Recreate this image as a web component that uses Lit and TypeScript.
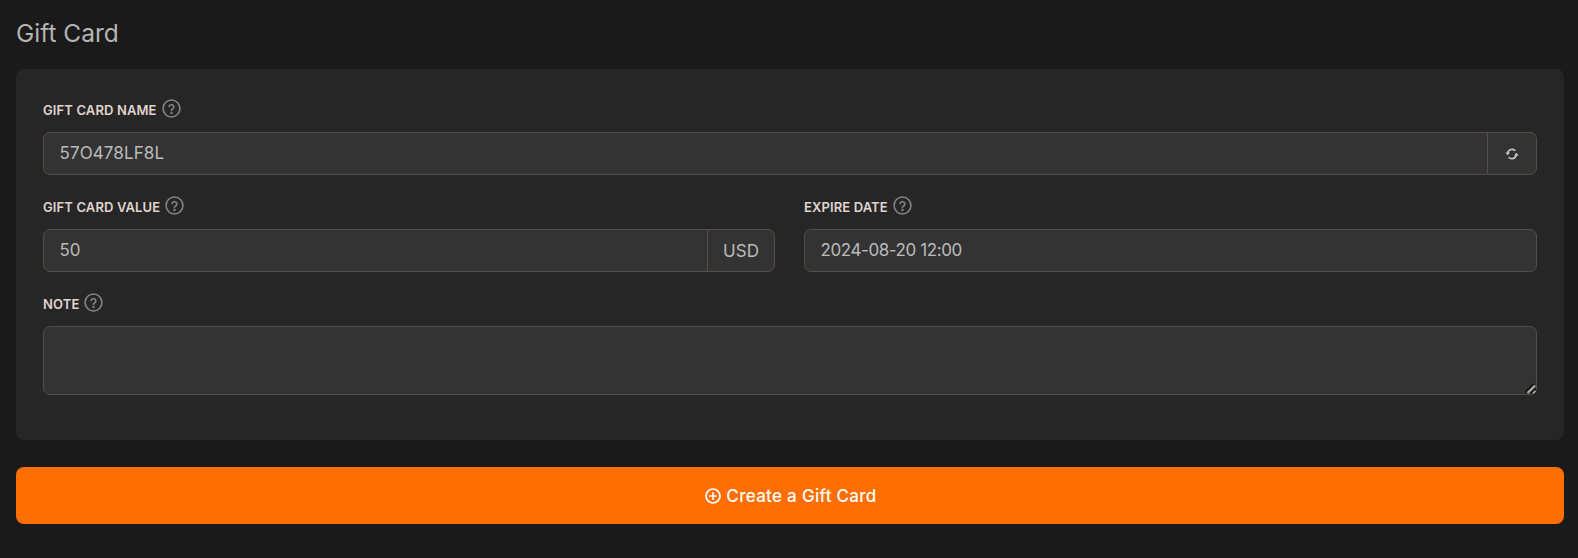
import { LitElement, html, css, svg } from "lit";
import { customElement } from "lit/decorators.js";

const help = svg`<svg class="help" viewBox="0 0 18 18" width="19" height="19" fill="none" stroke="#858585" stroke-width="1.5" stroke-linecap="round" stroke-linejoin="round"><circle cx="9" cy="9" r="8"/><path d="M6.7 7.1a2.3 2.3 0 0 1 4.5.6c0 1.5-2.2 1.9-2.2 3.2"/><circle cx="9" cy="13.2" r=".4" fill="#858585"/></svg>`;

@customElement("app-root")
export class AppRoot extends LitElement {
  static styles = css`
    :host { display: block; background: #1a1a1a; height: 558px; box-sizing: border-box; padding: 17px 14px 16px 16px; font-family: Inter, "Liberation Sans", sans-serif; color: #bbb; overflow: hidden; }
    * { box-sizing: border-box; }
    h1 { margin: 0 0 20px; font-size: 24.5px; font-weight: 400; line-height: 32px; height: 32px; color: #b4b4b4; }
    .card { background: #262626; border-radius: 8px; height: 371px; padding: 29px 27px 27px; display: flex; flex-direction: column; gap: 20px; }
    .row { display: grid; grid-template-columns: 732px 1fr; gap: 29px; }
    .field { min-width: 0; display: flex; flex-direction: column; gap: 10px; }
    .label { display: flex; align-items: center; gap: 5px; height: 24px; font-size: 13px; letter-spacing: 0.12px; font-weight: 600; color: #e0d4cf; line-height: 24px; }
    .help { display: block; flex: none; position: relative; top: -2px; }
    .group { display: flex; height: 43px; border: 1px solid #574c47; border-radius: 7px; background: #333; overflow: hidden; flex: none; }
    input { flex: 1; min-width: 0; height: 100%; border: 0; outline: 0; background: transparent; padding: 0 15.5px; margin-top: -1px; font: 400 17px Inter, "Liberation Sans", sans-serif; color: #bbb; }
    input.name { letter-spacing: 0.1px; }
    input.date { letter-spacing: -0.42px; }
    .addon { display: flex; align-items: center; justify-content: center; flex: none; border-left: 1px solid #574c47; color: #bbb; font-size: 17px; }
    .addon.sync { width: 49px; }
    .addon.unit { width: 67px; }
    .note { position: relative; height: 69px; flex: none; }
    textarea { display: block; width: 100%; height: 69px; border: 1px solid #574c47; border-radius: 7px; background: #333; outline: 0; padding: 8px 15px; color: #bbb; font: 400 17px Inter, sans-serif; resize: none; }
    .grip { position: absolute; right: 1px; bottom: 1px; display: block; }
    button { display: flex; align-items: center; justify-content: center; gap: 5px; width: 100%; height: 57px; margin-top: 27px; padding: 0 0 0 2px; border: 0; border-radius: 8px; background: #ff6e00; color: #fff; font: 500 17px Inter, "Liberation Sans", sans-serif; letter-spacing: 0.3px; }
  `;

  render() {
    return html`
      <h1>Gift Card</h1>
      <div class="card">
        <div class="field">
          <div class="label">GIFT CARD NAME ${help}</div>
          <div class="group">
            <input class="name" value="57O478LF8L" />
            <div class="addon sync">
              <svg viewBox="0 0 16 14" width="14" height="12" fill="none" stroke="#c8c8c8" stroke-width="2"><path d="M3.2 6a5 5 0 0 1 8.7-2.8"/><path d="M12.8 8a5 5 0 0 1-8.7 2.8"/><path d="M.2 5.2h5.4L2.9 8.4z" fill="#c8c8c8" stroke="none"/><path d="M15.8 8.8h-5.4L13.1 5.6z" fill="#c8c8c8" stroke="none"/></svg>
            </div>
          </div>
        </div>
        <div class="row">
          <div class="field">
            <div class="label">GIFT CARD VALUE ${help}</div>
            <div class="group">
              <input value="50" />
              <div class="addon unit">USD</div>
            </div>
          </div>
          <div class="field">
            <div class="label">EXPIRE DATE ${help}</div>
            <div class="group"><input class="date" value="2024-08-20 12:00" /></div>
          </div>
        </div>
        <div class="field">
          <div class="label">NOTE ${help}</div>
          <div class="note">
            <textarea></textarea>
            <svg class="grip" viewBox="0 0 11 11" width="11" height="11" fill="none"><path d="M.5 9.5 9 1" stroke="#111" stroke-width="2"/><path d="M2.5 10 10 2.5" stroke="#b0b0b0" stroke-width="2.2"/><path d="M6 10.5l4.5-4.5" stroke="#111" stroke-width="1.2"/><path d="M7.8 10.5 10.5 7.8" stroke="#b0b0b0" stroke-width="1.6"/></svg>
          </div>
        </div>
      </div>
      <button>
        <svg viewBox="0 0 16 16" width="16" height="16" fill="none" stroke="#fff" stroke-width="1.7" stroke-linecap="round"><circle cx="8" cy="8" r="7"/><path d="M8 4.8v6.4M4.8 8h6.4"/></svg>
        Create a Gift Card
      </button>
    `;
  }
}
